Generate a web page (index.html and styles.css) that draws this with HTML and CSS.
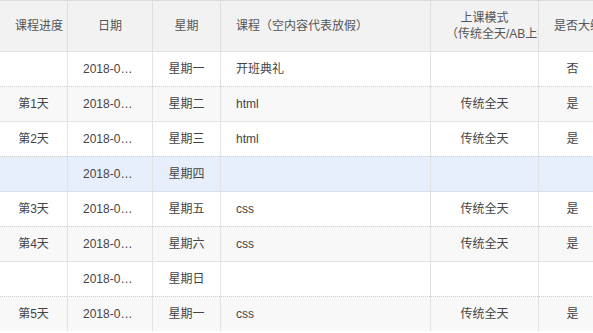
FILE: index.html
```html
<!DOCTYPE html>
<html lang="zh-CN">
<head>
<meta charset="utf-8">
<title>课程表</title>
<link rel="stylesheet" href="styles.css">
</head>
<body>
<div class="table-wrap">
<table class="schedule">
  <colgroup>
    <col class="c-progress">
    <col class="c-date">
    <col class="c-week">
    <col class="c-course">
    <col class="c-mode">
    <col class="c-practice">
  </colgroup>
  <thead>
    <tr>
      <th>课程进度</th>
      <th>日期</th>
      <th>星期</th>
      <th class="left">课程（空内容代表放假）</th>
      <th>上课模式<br>（传统全天/AB上午）</th>
      <th>是否大练习</th>
    </tr>
  </thead>
  <tbody>
    <tr>
      <td></td><td>2018-03-05</td><td>星期一</td><td class="left">开班典礼</td><td></td><td>否</td>
    </tr>
    <tr>
      <td>第1天</td><td>2018-03-06</td><td>星期二</td><td class="left">html</td><td>传统全天</td><td>是</td>
    </tr>
    <tr>
      <td>第2天</td><td>2018-03-07</td><td>星期三</td><td class="left">html</td><td>传统全天</td><td>是</td>
    </tr>
    <tr class="selected">
      <td></td><td>2018-03-08</td><td>星期四</td><td class="left"></td><td></td><td></td>
    </tr>
    <tr>
      <td>第3天</td><td>2018-03-09</td><td>星期五</td><td class="left">css</td><td>传统全天</td><td>是</td>
    </tr>
    <tr>
      <td>第4天</td><td>2018-03-10</td><td>星期六</td><td class="left">css</td><td>传统全天</td><td>是</td>
    </tr>
    <tr>
      <td></td><td>2018-03-11</td><td>星期日</td><td class="left"></td><td></td><td></td>
    </tr>
    <tr>
      <td>第5天</td><td>2018-03-12</td><td>星期一</td><td class="left">css</td><td>传统全天</td><td>是</td>
    </tr>
  </tbody>
</table>
</div>
</body>
</html>
```
FILE: styles.css
```css
html, body {
  margin: 0;
  padding: 0;
  background: #fff;
  overflow: hidden;
}
.table-wrap {
  width: 593px;
  overflow: hidden;
}
.schedule {
  table-layout: fixed;
  border-collapse: separate;
  border-spacing: 0;
  width: 606px;
  font-family: "Liberation Sans", "Noto Sans CJK SC", sans-serif;
  font-size: 12px;
  color: #555;
}
.c-progress { width: 67px; }
.c-date { width: 85px; }
.c-week { width: 68px; }
.c-course { width: 210px; }
.c-mode { width: 108px; }
.c-practice { width: 68px; }

.schedule th,
.schedule td {
  box-sizing: border-box;
  padding: 0 15px;
  text-align: center;
  white-space: nowrap;
  overflow: hidden;
  text-overflow: ellipsis;
  border-top: 1px solid #e4e4e4;
  border-left: 1px solid #e2e2e2;
  line-height: 16px;
}
.schedule th:first-child,
.schedule td:first-child {
  border-left: 0;
}
.schedule th {
  height: 51px;
  font-weight: normal;
  background: #f2f2f2;
  border-top-color: #dcdcdc;
  border-left-color: #dedede;
  text-overflow: clip;
  color: #555;
}
.schedule td {
  height: 35px;
  color: #444;
}
.schedule .left {
  text-align: left;
}
.schedule tbody tr:nth-child(even) td {
  background: #f8f8f8;
  border-top: 1px dotted #cfcfcf;
}
.schedule tbody tr:nth-child(even) td:not(:first-child) {
  border-left: 1px solid #e2e2e2;
}
.schedule tbody tr.selected td {
  background: #e8effc;
}
.schedule tbody tr.selected + tr td {
  border-top-color: #d6dff0;
}
```
